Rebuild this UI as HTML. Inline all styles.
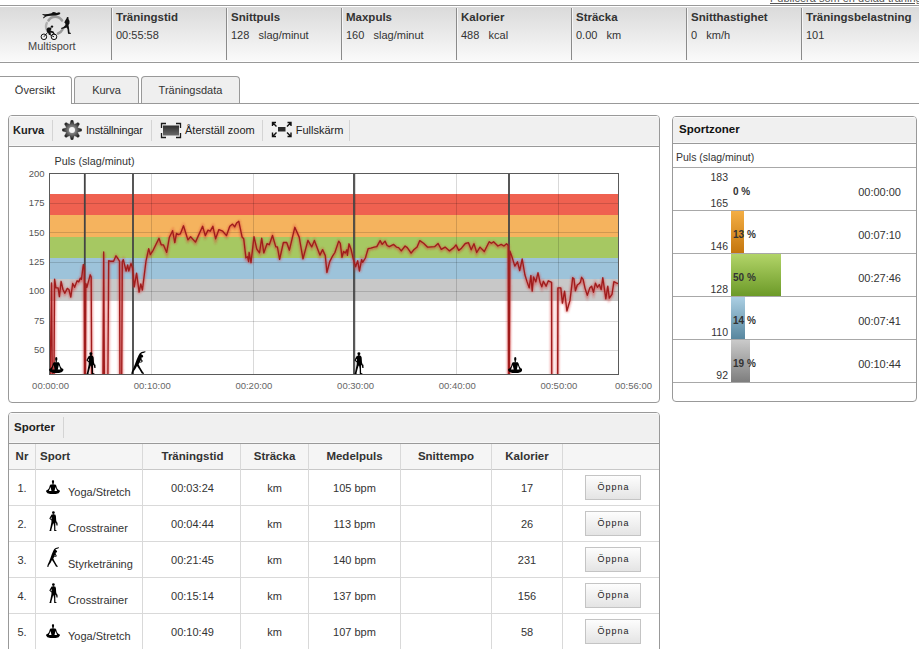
<!DOCTYPE html>
<html><head><meta charset="utf-8">
<style>
*{box-sizing:border-box;margin:0;padding:0}
html,body{width:919px;height:649px;overflow:hidden;background:#fff;font-family:"Liberation Sans",sans-serif;color:#333;font-size:11px}
.a{position:absolute;white-space:nowrap}
.hdr{position:absolute;left:0;top:5px;width:919px;height:58px;border-top:1px solid #999;border-bottom:1px solid #999;background:#fff}
.hdrin{position:absolute;left:0;top:1px;width:919px;height:54px;background:linear-gradient(#dadada,#fafafa)}
.dv{position:absolute;top:8px;width:1px;height:52px;background:#8a8a8a;box-shadow:1px 0 #f6f6f6}
.ht{position:absolute;top:11px;font-weight:bold;font-size:11.5px;color:#333}
.hv{position:absolute;top:29px;font-size:11px;color:#333}
.tabline{position:absolute;left:71px;top:103px;width:848px;height:1px;background:#999}
.tab{position:absolute;top:76px;height:27px;border:1px solid #999;border-bottom:none;border-radius:4px 4px 0 0;background:#efefef;text-align:center;font-size:11px;line-height:26px;color:#333}
.panel{position:absolute;border:1px solid #999;border-radius:4px;background:#fff;overflow:hidden}
.tb{position:absolute;left:0;top:0;right:0;background:#f0f0f0;border-bottom:1px solid #999;box-shadow:inset 0 1px #fafafa,inset 0 -1px #f7f7f7}
.sep{position:absolute;width:1px;background:#d4d4d4}
.zl{position:absolute;left:673px;width:243px;height:1px;background:#a8a8a8}
.zn{position:absolute;width:60px;text-align:right;font-size:10.5px;color:#333;line-height:12px}
.zp{position:absolute;left:733px;font-size:10px;font-weight:bold;color:#333;line-height:12px;margin-top:1px}
.zt{position:absolute;left:820px;width:81px;text-align:right;font-size:11px;color:#333;line-height:12px;margin-top:0.5px}
.bar{position:absolute;left:731px;height:42px}
.rl{position:absolute;left:9px;width:650px;height:1px;background:#d9d9d9}
.cl{position:absolute;top:444px;width:1px;height:205px;background:#d9d9d9}
.th{position:absolute;top:450px;font-weight:bold;font-size:11.5px;color:#333;text-align:center;line-height:12px}
.td{position:absolute;font-size:11px;color:#333;text-align:center;line-height:12px}
.btn{position:absolute;left:585px;width:56px;height:25px;border:1px solid #c4c4c4;background:linear-gradient(#fdfdfd,#e4e4e4);font-size:9px;color:#222;text-align:center;line-height:22.5px;letter-spacing:1px;padding-left:1px}
</style></head><body>

<div class="a" style="left:770px;top:-8px;font-size:11px;color:#555;text-decoration:underline">Publicera som en delad träning</div>

<div class="hdr"><div class="hdrin"></div></div>
<div class="dv" style="left:111px"></div>
<div class="dv" style="left:226px"></div>
<div class="dv" style="left:341px"></div>
<div class="dv" style="left:456px"></div>
<div class="dv" style="left:571px"></div>
<div class="dv" style="left:686px"></div>
<div class="dv" style="left:801px"></div>

<!-- multisport logo -->
<svg class="a" style="left:38px;top:8px" width="36" height="34" viewBox="0 0 36 34">
  <defs><filter id="lb" x="-20%" y="-20%" width="140%" height="140%"><feGaussianBlur stdDeviation="0.6"/></filter></defs>
  <g filter="url(#lb)" fill="none" stroke-linecap="round">
    <path d="M10.5,12.5 A8,8 0 0 1 24,12.5" stroke="#9c9c9c" stroke-width="2.6"/>
    <path d="M24.5,21.5 A8,8 0 0 1 20,25.5" stroke="#9a9a9a" stroke-width="2.6"/>
    <path d="M9.5,23 A8,8 0 0 1 8.8,15" stroke="#b0b0b0" stroke-width="2.4"/>
  </g>
  <path d="M4,6 L7,6.2 L10,6 L13.5,5.2 L15,4 L17,4.3 L18.5,5 L21,4.2 L22.5,5 L21.5,6.5 L18,7.5 L13,7.8 L10,8 L8,8.5 L6,10 L5,10.5 L5.5,9 L7,8 L5,7 Z" fill="#111"/>
  <path d="M29,9 L30.5,9.3 L30.5,11 L31.5,13 L31.5,15.5 L30.5,17 L31,20 L31.5,24.5 L33,25 L32.5,26 L30,25.8 L29.5,21 L28.5,19.5 L26,20.5 L23.5,21 L23,20 L25.5,19 L27.5,17 L27,14.5 L26,15 L27.5,12 L28.5,10.5 Z" fill="#111"/>
  <circle cx="14" cy="18.6" r="1.2" fill="#111"/>
  <path d="M13,19.5 L10,19.5 L8.5,21 L9,24 L10.5,25.5 L12,27 L13,26.5 L12.5,24.5 L14.5,25 L16,27 L17,26.5 L15.5,23.5 L12.5,22.5 L13.5,21 Z" fill="#111"/>
  <circle cx="5.9" cy="28.8" r="2.8" fill="none" stroke="#111" stroke-width="1"/>
  <circle cx="16" cy="28.8" r="2.8" fill="none" stroke="#111" stroke-width="1"/>
  <path d="M5.9,28.8 L9.5,24.5 M10.5,26 L16,28.8" fill="none" stroke="#111" stroke-width="0.9"/>
</svg>
<div class="a" style="left:28px;top:40px;font-size:11px;color:#444">Multisport</div>

<div class="ht" style="left:116px">Träningstid</div><div class="hv" style="left:116px">00:55:58</div>
<div class="ht" style="left:231px">Snittpuls</div><div class="hv" style="left:231px">128&nbsp;&nbsp; slag/minut</div>
<div class="ht" style="left:346px">Maxpuls</div><div class="hv" style="left:346px">160&nbsp;&nbsp; slag/minut</div>
<div class="ht" style="left:461px">Kalorier</div><div class="hv" style="left:461px">488&nbsp;&nbsp; kcal</div>
<div class="ht" style="left:576px">Sträcka</div><div class="hv" style="left:576px">0.00&nbsp;&nbsp; km</div>
<div class="ht" style="left:691px">Snitthastighet</div><div class="hv" style="left:691px">0&nbsp;&nbsp; km/h</div>
<div class="ht" style="left:806px">Träningsbelastning</div><div class="hv" style="left:806px">101</div>

<!-- tabs -->
<div class="tabline"></div>
<div class="tab" style="left:-10px;width:82px;height:28px;background:#fff;padding-left:8px">Översikt</div>
<div class="tab" style="left:74px;width:65px">Kurva</div>
<div class="tab" style="left:141px;width:99px">Träningsdata</div>

<!-- Kurva panel -->
<div class="panel" style="left:8px;top:115px;width:652px;height:288px">
  <div class="tb" style="height:31px"></div>
</div>
<div class="a" style="left:13px;top:124px;font-weight:bold;font-size:11px;color:#222">Kurva</div>
<div class="sep" style="left:52px;top:120px;height:21px"></div>
<svg class="a" style="left:62px;top:120px" width="20" height="20" viewBox="0 0 20 20">
  <defs><radialGradient id="gg" cx="50%" cy="50%" r="50%"><stop offset="0.3" stop-color="#8a8a8a"/><stop offset="0.65" stop-color="#555"/><stop offset="1" stop-color="#111"/></radialGradient></defs>
  <path d="M8.99,0.35 L11.01,0.35 L12.26,4.55 L16.10,2.46 L17.54,3.90 L15.45,7.74 L19.65,8.99 L19.65,11.01 L15.45,12.26 L17.54,16.10 L16.10,17.54 L12.26,15.45 L11.01,19.65 L8.99,19.65 L7.74,15.45 L3.90,17.54 L2.46,16.10 L4.55,12.26 L0.35,11.01 L0.35,8.99 L4.55,7.74 L2.46,3.90 L3.90,2.46 L7.74,4.55Z" fill="url(#gg)" stroke="#333" stroke-width="0.4" stroke-linejoin="round"/>
  <circle cx="10" cy="10" r="3" fill="#f4f4f4"/>
</svg>
<div class="a" style="left:86px;top:124px;font-size:11px;color:#222;letter-spacing:-0.2px">Inställningar</div>
<div class="sep" style="left:151px;top:120px;height:21px"></div>
<svg class="a" style="left:160px;top:122px" width="22" height="17" viewBox="0 0 22 17">
  <defs><linearGradient id="zg" x1="0" y1="0" x2="0" y2="1"><stop offset="0" stop-color="#2e2e2e"/><stop offset="1" stop-color="#6a6a6a"/></linearGradient></defs>
  <rect x="3" y="3.5" width="16" height="10" fill="url(#zg)"/>
  <path d="M1.5,6 V1.5 H6 M16,1.5 H20.5 V6 M20.5,11 V15.5 H16 M6,15.5 H1.5 V11" fill="none" stroke="#1a1a1a" stroke-width="1.3"/>
</svg>
<div class="a" style="left:185px;top:124px;font-size:11px;color:#222">Återställ zoom</div>
<div class="sep" style="left:262px;top:120px;height:21px"></div>
<svg class="a" style="left:271px;top:121px" width="22" height="17" viewBox="0 0 22 17">
  <rect x="7" y="6" width="7.5" height="4.5" fill="#2a2a2a"/>
  <path d="M1.5,5 V1.5 H5 M1.8,1.8 L5.5,5.5 M16.5,1.5 H20 V5 M19.7,1.8 L16,5.5 M1.5,11.5 V15.5 H5 M1.8,15.2 L5.5,11.5 M20,11.5 V15.5 H16.5 M19.7,15.2 L16,11.5" fill="none" stroke="#111" stroke-width="1.4"/>
</svg>
<div class="a" style="left:295.7px;top:124px;font-size:11px;color:#222">Fullskärm</div>
<div class="sep" style="left:349px;top:120px;height:21px"></div>

<svg class="a" style="left:0;top:0" width="919" height="649" viewBox="0 0 919 649">
<defs><clipPath id="pc"><rect x="49.5" y="173.5" width="569" height="201"/></clipPath><filter id="sh" x="-5%" y="-20%" width="110%" height="140%"><feGaussianBlur stdDeviation="0.9"/></filter></defs>
<rect x="49.5" y="173.5" width="569" height="201" fill="#fff"/>
<rect x="49.5" y="194" width="569" height="21" fill="#ef6150"/>
<rect x="49.5" y="215" width="569" height="22" fill="#f5b35e"/>
<rect x="49.5" y="237" width="569" height="21" fill="#a6c862"/>
<rect x="49.5" y="258" width="569" height="21" fill="#9dc3da"/>
<rect x="49.5" y="279" width="569" height="22" fill="#c8c8c8"/>
<line x1="49.5" y1="203.5" x2="618.5" y2="203.5" stroke="#000" stroke-opacity="0.15" stroke-width="1"/>
<line x1="49.5" y1="232.5" x2="618.5" y2="232.5" stroke="#000" stroke-opacity="0.15" stroke-width="1"/>
<line x1="49.5" y1="262.5" x2="618.5" y2="262.5" stroke="#000" stroke-opacity="0.15" stroke-width="1"/>
<line x1="49.5" y1="291.5" x2="618.5" y2="291.5" stroke="#000" stroke-opacity="0.15" stroke-width="1"/>
<line x1="49.5" y1="321.5" x2="618.5" y2="321.5" stroke="#000" stroke-opacity="0.15" stroke-width="1"/>
<line x1="49.5" y1="350.5" x2="618.5" y2="350.5" stroke="#000" stroke-opacity="0.15" stroke-width="1"/>
<line x1="151.5" y1="173.5" x2="151.5" y2="374.5" stroke="#000" stroke-opacity="0.15" stroke-width="1"/>
<line x1="253.5" y1="173.5" x2="253.5" y2="374.5" stroke="#000" stroke-opacity="0.15" stroke-width="1"/>
<line x1="355.5" y1="173.5" x2="355.5" y2="374.5" stroke="#000" stroke-opacity="0.15" stroke-width="1"/>
<line x1="456.5" y1="173.5" x2="456.5" y2="374.5" stroke="#000" stroke-opacity="0.15" stroke-width="1"/>
<line x1="558.5" y1="173.5" x2="558.5" y2="374.5" stroke="#000" stroke-opacity="0.15" stroke-width="1"/>
<line x1="84.8" y1="173.5" x2="84.8" y2="374.5" stroke="#444" stroke-width="1.8"/>
<line x1="133" y1="173.5" x2="133" y2="374.5" stroke="#444" stroke-width="1.8"/>
<line x1="354" y1="173.5" x2="354" y2="374.5" stroke="#444" stroke-width="1.8"/>
<line x1="509" y1="173.5" x2="509" y2="374.5" stroke="#444" stroke-width="1.8"/>
<g clip-path="url(#pc)"><path d="M49.6,420.0 L51.5,283.0 L52.6,420.0 L53.7,420.0 L54.6,279.2 L55.9,287.9 L58.1,287.9 L59.4,296.6 L61.1,281.3 L63.0,289.5 L64.8,293.3 L67.3,288.4 L68.9,289.5 L70.8,297.1 L72.7,283.5 L74.6,287.3 L77.1,280.8 L78.7,281.9 L80.4,278.1 L81.5,279.2 L83.3,264.5 L84.2,268.0 L84.7,420.0 L85.3,420.0 L85.8,283.5 L86.9,287.3 L90.2,274.8 L91.2,277.0 L91.8,420.0 L102.7,420.0 L103.7,252.0 L104.6,420.0 L107.6,420.0 L108.7,260.7 L110.3,261.2 L113.6,261.2 L116.0,255.8 L117.9,258.5 L119.5,261.2 L120.1,420.0 L121.5,420.0 L122.3,261.8 L123.3,259.6 L126.1,271.0 L127.7,265.0 L128.8,271.0 L131.0,263.4 L132.6,268.3 L134.2,286.8 L136.6,273.2 L139.1,292.2 L140.8,284.0 L142.4,290.0 L146.0,261.1 L148.7,248.6 L150.3,254.6 L153.1,250.3 L159.0,238.3 L161.2,244.8 L163.4,244.8 L166.7,252.4 L169.4,237.2 L172.6,230.7 L174.8,242.6 L176.5,233.4 L178.1,234.5 L180.3,233.9 L183.5,225.8 L187.9,239.9 L190.6,236.7 L195.5,242.1 L202.6,226.3 L205.3,235.6 L208.0,230.1 L210.2,231.2 L212.9,226.3 L215.6,238.8 L218.9,229.6 L222.7,231.2 L226.5,235.6 L229.8,226.3 L232.5,224.1 L234.7,226.9 L236.6,223.0 L238.8,221.3 L242.1,237.1 L243.7,238.7 L245.9,257.8 L247.5,256.7 L248.6,261.6 L249.1,252.3 L251.0,262.7 L254.0,236.6 L256.8,249.1 L259.5,252.9 L261.7,238.2 L263.8,252.9 L267.1,243.6 L269.3,244.7 L272.5,235.5 L275.8,246.9 L277.4,246.9 L279.6,259.4 L283.4,242.5 L286.7,242.5 L289.4,250.2 L294.8,227.3 L299.2,237.1 L303.0,258.9 L307.9,240.4 L311.7,246.9 L314.4,240.4 L319.9,255.1 L322.6,249.6 L325.3,255.6 L326.9,272.5 L329.7,261.6 L332.7,255.8 L334.9,252.5 L338.7,241.1 L340.3,243.3 L342.0,257.4 L343.6,251.5 L345.2,253.1 L346.9,249.8 L347.4,255.3 L349.0,243.8 L351.2,249.8 L353.4,259.6 L355.6,266.7 L357.7,260.7 L359.4,271.0 L361.6,259.6 L362.6,262.3 L365.4,258.0 L368.1,248.7 L370.8,248.2 L374.1,247.1 L376.8,246.6 L380.1,240.6 L382.2,244.4 L385.0,241.1 L387.1,245.5 L389.3,246.6 L393.7,244.4 L396.4,247.1 L398.6,247.6 L401.3,250.9 L405.1,246.0 L407.3,247.6 L411.1,253.1 L413.8,249.8 L417.1,247.1 L419.8,240.6 L423.6,243.3 L427.4,247.1 L428.3,247.1 L434.8,246.6 L438.1,243.5 L441.3,249.3 L445.1,247.1 L449.5,250.9 L453.8,247.6 L456.0,244.9 L458.7,250.4 L461.5,248.2 L465.3,243.5 L468.5,242.7 L471.2,249.8 L474.0,243.8 L476.7,252.5 L480.0,247.1 L484.3,251.5 L489.2,241.7 L491.4,243.3 L493.6,241.7 L497.9,246.0 L501.2,244.4 L503.9,246.0 L506.6,243.8 L508.2,245.5 L508.6,420.0 L509.2,420.0 L509.9,250.9 L512.0,256.9 L514.8,266.1 L517.5,261.8 L519.7,270.5 L522.2,259.0 L524.9,274.8 L527.1,281.9 L529.2,287.9 L530.9,275.4 L532.2,291.1 L533.6,277.0 L535.8,281.9 L538.0,272.6 L540.1,282.4 L541.8,286.8 L543.4,281.3 L546.1,286.2 L548.3,280.8 L551.6,282.4 L551.8,420.0 L557.5,420.0 L557.9,287.9 L560.8,287.9 L562.4,303.1 L564.6,291.1 L566.9,311.0 L570.0,300.4 L572.7,277.7 L573.9,278.5 L575.4,290.8 L577.3,285.0 L579.3,283.5 L580.4,282.3 L581.6,277.3 L583.1,279.3 L585.0,288.1 L587.3,295.4 L589.7,288.1 L591.6,286.2 L593.5,292.3 L595.4,283.1 L597.4,287.3 L599.3,284.6 L601.2,289.7 L602.8,277.7 L605.8,298.9 L607.8,286.2 L609.3,298.1 L612.0,294.3 L613.9,281.6 L617.4,283.5 L618.5,283.0" transform="translate(0,0.8)" fill="none" stroke="#d83030" stroke-opacity="0.55" stroke-width="2.8" filter="url(#sh)"/><path d="M49.6,420.0 L51.5,283.0 L52.6,420.0 L53.7,420.0 L54.6,279.2 L55.9,287.9 L58.1,287.9 L59.4,296.6 L61.1,281.3 L63.0,289.5 L64.8,293.3 L67.3,288.4 L68.9,289.5 L70.8,297.1 L72.7,283.5 L74.6,287.3 L77.1,280.8 L78.7,281.9 L80.4,278.1 L81.5,279.2 L83.3,264.5 L84.2,268.0 L84.7,420.0 L85.3,420.0 L85.8,283.5 L86.9,287.3 L90.2,274.8 L91.2,277.0 L91.8,420.0 L102.7,420.0 L103.7,252.0 L104.6,420.0 L107.6,420.0 L108.7,260.7 L110.3,261.2 L113.6,261.2 L116.0,255.8 L117.9,258.5 L119.5,261.2 L120.1,420.0 L121.5,420.0 L122.3,261.8 L123.3,259.6 L126.1,271.0 L127.7,265.0 L128.8,271.0 L131.0,263.4 L132.6,268.3 L134.2,286.8 L136.6,273.2 L139.1,292.2 L140.8,284.0 L142.4,290.0 L146.0,261.1 L148.7,248.6 L150.3,254.6 L153.1,250.3 L159.0,238.3 L161.2,244.8 L163.4,244.8 L166.7,252.4 L169.4,237.2 L172.6,230.7 L174.8,242.6 L176.5,233.4 L178.1,234.5 L180.3,233.9 L183.5,225.8 L187.9,239.9 L190.6,236.7 L195.5,242.1 L202.6,226.3 L205.3,235.6 L208.0,230.1 L210.2,231.2 L212.9,226.3 L215.6,238.8 L218.9,229.6 L222.7,231.2 L226.5,235.6 L229.8,226.3 L232.5,224.1 L234.7,226.9 L236.6,223.0 L238.8,221.3 L242.1,237.1 L243.7,238.7 L245.9,257.8 L247.5,256.7 L248.6,261.6 L249.1,252.3 L251.0,262.7 L254.0,236.6 L256.8,249.1 L259.5,252.9 L261.7,238.2 L263.8,252.9 L267.1,243.6 L269.3,244.7 L272.5,235.5 L275.8,246.9 L277.4,246.9 L279.6,259.4 L283.4,242.5 L286.7,242.5 L289.4,250.2 L294.8,227.3 L299.2,237.1 L303.0,258.9 L307.9,240.4 L311.7,246.9 L314.4,240.4 L319.9,255.1 L322.6,249.6 L325.3,255.6 L326.9,272.5 L329.7,261.6 L332.7,255.8 L334.9,252.5 L338.7,241.1 L340.3,243.3 L342.0,257.4 L343.6,251.5 L345.2,253.1 L346.9,249.8 L347.4,255.3 L349.0,243.8 L351.2,249.8 L353.4,259.6 L355.6,266.7 L357.7,260.7 L359.4,271.0 L361.6,259.6 L362.6,262.3 L365.4,258.0 L368.1,248.7 L370.8,248.2 L374.1,247.1 L376.8,246.6 L380.1,240.6 L382.2,244.4 L385.0,241.1 L387.1,245.5 L389.3,246.6 L393.7,244.4 L396.4,247.1 L398.6,247.6 L401.3,250.9 L405.1,246.0 L407.3,247.6 L411.1,253.1 L413.8,249.8 L417.1,247.1 L419.8,240.6 L423.6,243.3 L427.4,247.1 L428.3,247.1 L434.8,246.6 L438.1,243.5 L441.3,249.3 L445.1,247.1 L449.5,250.9 L453.8,247.6 L456.0,244.9 L458.7,250.4 L461.5,248.2 L465.3,243.5 L468.5,242.7 L471.2,249.8 L474.0,243.8 L476.7,252.5 L480.0,247.1 L484.3,251.5 L489.2,241.7 L491.4,243.3 L493.6,241.7 L497.9,246.0 L501.2,244.4 L503.9,246.0 L506.6,243.8 L508.2,245.5 L508.6,420.0 L509.2,420.0 L509.9,250.9 L512.0,256.9 L514.8,266.1 L517.5,261.8 L519.7,270.5 L522.2,259.0 L524.9,274.8 L527.1,281.9 L529.2,287.9 L530.9,275.4 L532.2,291.1 L533.6,277.0 L535.8,281.9 L538.0,272.6 L540.1,282.4 L541.8,286.8 L543.4,281.3 L546.1,286.2 L548.3,280.8 L551.6,282.4 L551.8,420.0 L557.5,420.0 L557.9,287.9 L560.8,287.9 L562.4,303.1 L564.6,291.1 L566.9,311.0 L570.0,300.4 L572.7,277.7 L573.9,278.5 L575.4,290.8 L577.3,285.0 L579.3,283.5 L580.4,282.3 L581.6,277.3 L583.1,279.3 L585.0,288.1 L587.3,295.4 L589.7,288.1 L591.6,286.2 L593.5,292.3 L595.4,283.1 L597.4,287.3 L599.3,284.6 L601.2,289.7 L602.8,277.7 L605.8,298.9 L607.8,286.2 L609.3,298.1 L612.0,294.3 L613.9,281.6 L617.4,283.5 L618.5,283.0" fill="none" stroke="#a01c1c" stroke-width="1.35" stroke-linejoin="round"/></g>
<rect x="49.5" y="173.5" width="569" height="201" fill="none" stroke="#5a5a5a" stroke-width="1"/>
<text x="44.5" y="176.7" text-anchor="end" font-size="9.5" fill="#555" font-family="Liberation Sans">200</text>
<text x="44.5" y="206.1" text-anchor="end" font-size="9.5" fill="#555" font-family="Liberation Sans">175</text>
<text x="44.5" y="235.5" text-anchor="end" font-size="9.5" fill="#555" font-family="Liberation Sans">150</text>
<text x="44.5" y="264.9" text-anchor="end" font-size="9.5" fill="#555" font-family="Liberation Sans">125</text>
<text x="44.5" y="294.3" text-anchor="end" font-size="9.5" fill="#555" font-family="Liberation Sans">100</text>
<text x="44.5" y="323.7" text-anchor="end" font-size="9.5" fill="#555" font-family="Liberation Sans">75</text>
<text x="44.5" y="353.1" text-anchor="end" font-size="9.5" fill="#555" font-family="Liberation Sans">50</text>
<text x="50.6" y="389" text-anchor="middle" font-size="9.5" fill="#666" font-family="Liberation Sans">00:00:00</text>
<text x="152.3" y="389" text-anchor="middle" font-size="9.5" fill="#666" font-family="Liberation Sans">00:10:00</text>
<text x="253.9" y="389" text-anchor="middle" font-size="9.5" fill="#666" font-family="Liberation Sans">00:20:00</text>
<text x="355.6" y="389" text-anchor="middle" font-size="9.5" fill="#666" font-family="Liberation Sans">00:30:00</text>
<text x="457.3" y="389" text-anchor="middle" font-size="9.5" fill="#666" font-family="Liberation Sans">00:40:00</text>
<text x="558.9" y="389" text-anchor="middle" font-size="9.5" fill="#666" font-family="Liberation Sans">00:50:00</text>
<text x="652" y="389" text-anchor="end" font-size="9.5" fill="#666" font-family="Liberation Sans">00:56:00</text>
<text x="54.5" y="165" font-size="10.75" fill="#333" font-family="Liberation Sans">Puls (slag/minut)</text>
</svg><svg class="a" style="left:49px;top:357px" width="14.5" height="16" viewBox="0 0 14 14" preserveAspectRatio="none" fill="#000"><ellipse cx="7" cy="1.75" rx="1.1" ry="1.65"/><rect x="6.4" y="3" width="1.2" height="1.8"/><path fill-rule="evenodd" d="M4.6,4.5 L9.4,4.5 L10.2,5.6 L11,8.2 L12.3,9.8 L13.8,10.4 L13.9,11.6 L12.6,13.2 L9.8,14 L4.2,14 L1.4,13.2 L0.1,11.6 L0.2,10.4 L1.7,9.8 L3,8.2 L3.8,5.6 Z M2.9,11 L4.5,6.9 L5.5,11 Z M11.1,11 L9.5,6.9 L8.5,11 Z"/></svg><svg class="a" style="left:85.5px;top:352px" width="10" height="22" viewBox="0 0 9 20" preserveAspectRatio="none" fill="#000"><circle cx="4.4" cy="1.5" r="1.35"/><rect x="3.7" y="2.4" width="1.4" height="1.3"/><path fill-rule="evenodd" d="M2.6,3.4 L6.2,3.4 L6.9,5 L7.2,9.5 L7.8,11.3 L8.5,11.7 L8.6,14.5 L7.5,14.6 L7.1,12.2 L6.4,11.5 L6.3,15 L6.4,19.1 L7.7,19.6 L7.5,20 L5.2,20 L5.1,15.5 L4.6,12.6 L4.1,12.6 L3.1,16 L2.3,19.1 L2.4,20 L0.3,20 L0.8,19.1 L1.6,15.5 L2.4,11.3 L2.5,9.6 L0.3,7.4 L1.4,5.4 Z M1.5,7.3 L2.6,8.5 L2.6,6.1 Z"/></svg><svg class="a" style="left:131px;top:351px" width="14.5" height="23" viewBox="0 0 14.5 23" preserveAspectRatio="none" fill="#000"><path fill-rule="evenodd" d="M14.2,0.3 L14.6,1.1 L12.5,1.9 L10.8,2.2 L10.2,3.2 L11.6,3.9 L12.3,5.2 L11.5,6.4 L10.5,6.6 L10.6,8.4 L11.6,9.4 L11.5,10.8 L10.2,11.6 L8.6,11.6 L7.6,13.2 L9.2,16.5 L11.6,20.5 L13,22.2 L12.6,23 L10.8,22.5 L8.4,18.5 L6,15 L4.4,18 L2.2,21 L1.6,23 L0.2,22.8 L0.8,20.5 L2.6,16.6 L4.2,12.6 L5.8,8.2 L7.6,4.2 L8.8,2.2 L10.6,1.1 Z M9.3,9.4 L10.6,9.7 L10.2,10.8 L8.9,10.8 Z"/></svg><svg class="a" style="left:354px;top:352px" width="10" height="22" viewBox="0 0 9 20" preserveAspectRatio="none" fill="#000"><circle cx="4.4" cy="1.5" r="1.35"/><rect x="3.7" y="2.4" width="1.4" height="1.3"/><path fill-rule="evenodd" d="M2.6,3.4 L6.2,3.4 L6.9,5 L7.2,9.5 L7.8,11.3 L8.5,11.7 L8.6,14.5 L7.5,14.6 L7.1,12.2 L6.4,11.5 L6.3,15 L6.4,19.1 L7.7,19.6 L7.5,20 L5.2,20 L5.1,15.5 L4.6,12.6 L4.1,12.6 L3.1,16 L2.3,19.1 L2.4,20 L0.3,20 L0.8,19.1 L1.6,15.5 L2.4,11.3 L2.5,9.6 L0.3,7.4 L1.4,5.4 Z M1.5,7.3 L2.6,8.5 L2.6,6.1 Z"/></svg><svg class="a" style="left:507.5px;top:357px" width="14.5" height="16" viewBox="0 0 14 14" preserveAspectRatio="none" fill="#000"><ellipse cx="7" cy="1.75" rx="1.1" ry="1.65"/><rect x="6.4" y="3" width="1.2" height="1.8"/><path fill-rule="evenodd" d="M4.6,4.5 L9.4,4.5 L10.2,5.6 L11,8.2 L12.3,9.8 L13.8,10.4 L13.9,11.6 L12.6,13.2 L9.8,14 L4.2,14 L1.4,13.2 L0.1,11.6 L0.2,10.4 L1.7,9.8 L3,8.2 L3.8,5.6 Z M2.9,11 L4.5,6.9 L5.5,11 Z M11.1,11 L9.5,6.9 L8.5,11 Z"/></svg>

<!-- Sportzoner panel -->
<div class="panel" style="left:672px;top:116px;width:245px;height:286px">
  <div class="tb" style="height:27px"></div>
</div>
<div class="a" style="left:679px;top:123px;font-weight:bold;font-size:11.5px;color:#111">Sportzoner</div>
<div class="a" style="left:676px;top:151px;font-size:10.5px;color:#333">Puls (slag/minut)</div>
<div class="zl" style="top:167px"></div>
<div class="zl" style="top:210px"></div>
<div class="zl" style="top:253px"></div>
<div class="zl" style="top:296px"></div>
<div class="zl" style="top:339px"></div>
<div class="zl" style="top:382px"></div>

<div class="bar" style="top:211px;width:13px;background:linear-gradient(#f4ae44,#c4760e)"></div>
<div class="bar" style="top:254px;width:50px;background:linear-gradient(#b2d468,#6c9a28)"></div>
<div class="bar" style="top:297px;width:14px;background:linear-gradient(#abcfe3,#58879f)"></div>
<div class="bar" style="top:340px;width:19px;background:linear-gradient(#cacaca,#7e7e7e)"></div>

<div class="zn" style="left:668px;top:171px">183</div>
<div class="zn" style="left:668px;top:197px">165</div>
<div class="zn" style="left:668px;top:240px">146</div>
<div class="zn" style="left:668px;top:283px">128</div>
<div class="zn" style="left:668px;top:326px">110</div>
<div class="zn" style="left:668px;top:369px">92</div>

<div class="zp" style="top:185px">0 %</div>
<div class="zp" style="top:228px">13 %</div>
<div class="zp" style="top:271px">50 %</div>
<div class="zp" style="top:314px">14 %</div>
<div class="zp" style="top:357px">19 %</div>

<div class="zt" style="top:185px">00:00:00</div>
<div class="zt" style="top:228px">00:07:10</div>
<div class="zt" style="top:271px">00:27:46</div>
<div class="zt" style="top:314px">00:07:41</div>
<div class="zt" style="top:357px">00:10:44</div>

<!-- Sporter panel -->
<div class="panel" style="left:8px;top:412px;width:652px;height:260px">
  <div class="tb" style="height:31px"></div>
  <div style="position:absolute;left:0;top:31px;width:650px;height:25px;background:#f5f5f5"></div>
</div>
<div class="a" style="left:14px;top:421px;font-weight:bold;font-size:11.5px;color:#222">Sporter</div>
<div class="sep" style="left:63px;top:417px;height:21px"></div>

<div class="rl" style="top:469px;background:#c8c8c8"></div>
<div class="rl" style="top:505px"></div>
<div class="rl" style="top:541px"></div>
<div class="rl" style="top:577px"></div>
<div class="rl" style="top:613px"></div>
<div class="cl" style="left:35px"></div>
<div class="cl" style="left:142px"></div>
<div class="cl" style="left:240px"></div>
<div class="cl" style="left:308px"></div>
<div class="cl" style="left:400px"></div>
<div class="cl" style="left:491px"></div>
<div class="cl" style="left:562px"></div>

<div class="th" style="left:9px;width:26px">Nr</div>
<div class="th" style="left:40px">Sport</div>
<div class="th" style="left:144px;width:97px">Träningstid</div>
<div class="th" style="left:241px;width:67px">Sträcka</div>
<div class="th" style="left:309px;width:91px">Medelpuls</div>
<div class="th" style="left:401px;width:90px">Snittempo</div>
<div class="th" style="left:492px;width:70px">Kalorier</div>

<div class="td" style="left:9px;width:26px;top:482px">1.</div>
<svg class="a" style="left:46px;top:480px" width="14" height="14" viewBox="0 0 14 14" preserveAspectRatio="none" fill="#000"><ellipse cx="7" cy="1.75" rx="1.1" ry="1.65"/><rect x="6.4" y="3" width="1.2" height="1.8"/><path fill-rule="evenodd" d="M4.6,4.5 L9.4,4.5 L10.2,5.6 L11,8.2 L12.3,9.8 L13.8,10.4 L13.9,11.6 L12.6,13.2 L9.8,14 L4.2,14 L1.4,13.2 L0.1,11.6 L0.2,10.4 L1.7,9.8 L3,8.2 L3.8,5.6 Z M2.9,11 L4.5,6.9 L5.5,11 Z M11.1,11 L9.5,6.9 L8.5,11 Z"/></svg>
<div class="td" style="left:68px;top:486px;text-align:left">Yoga/Stretch</div>
<div class="td" style="left:144px;width:97px;top:482px">00:03:24</div>
<div class="td" style="left:241px;width:67px;top:482px">km</div>
<div class="td" style="left:309px;width:91px;top:482px">105 bpm</div>
<div class="td" style="left:492px;width:70px;top:482px">17</div>
<div class="btn" style="top:475px">Öppna</div>
<div class="td" style="left:9px;width:26px;top:518px">2.</div>
<svg class="a" style="left:48.5px;top:511px" width="9" height="20" viewBox="0 0 9 20" preserveAspectRatio="none" fill="#000"><circle cx="4.4" cy="1.5" r="1.35"/><rect x="3.7" y="2.4" width="1.4" height="1.3"/><path fill-rule="evenodd" d="M2.6,3.4 L6.2,3.4 L6.9,5 L7.2,9.5 L7.8,11.3 L8.5,11.7 L8.6,14.5 L7.5,14.6 L7.1,12.2 L6.4,11.5 L6.3,15 L6.4,19.1 L7.7,19.6 L7.5,20 L5.2,20 L5.1,15.5 L4.6,12.6 L4.1,12.6 L3.1,16 L2.3,19.1 L2.4,20 L0.3,20 L0.8,19.1 L1.6,15.5 L2.4,11.3 L2.5,9.6 L0.3,7.4 L1.4,5.4 Z M1.5,7.3 L2.6,8.5 L2.6,6.1 Z"/></svg>
<div class="td" style="left:68px;top:522px;text-align:left">Crosstrainer</div>
<div class="td" style="left:144px;width:97px;top:518px">00:04:44</div>
<div class="td" style="left:241px;width:67px;top:518px">km</div>
<div class="td" style="left:309px;width:91px;top:518px">113 bpm</div>
<div class="td" style="left:492px;width:70px;top:518px">26</div>
<div class="btn" style="top:511px">Öppna</div>
<div class="td" style="left:9px;width:26px;top:554px">3.</div>
<svg class="a" style="left:47px;top:547px" width="12" height="20" viewBox="0 0 14.5 23" preserveAspectRatio="none" fill="#000"><path fill-rule="evenodd" d="M14.2,0.3 L14.6,1.1 L12.5,1.9 L10.8,2.2 L10.2,3.2 L11.6,3.9 L12.3,5.2 L11.5,6.4 L10.5,6.6 L10.6,8.4 L11.6,9.4 L11.5,10.8 L10.2,11.6 L8.6,11.6 L7.6,13.2 L9.2,16.5 L11.6,20.5 L13,22.2 L12.6,23 L10.8,22.5 L8.4,18.5 L6,15 L4.4,18 L2.2,21 L1.6,23 L0.2,22.8 L0.8,20.5 L2.6,16.6 L4.2,12.6 L5.8,8.2 L7.6,4.2 L8.8,2.2 L10.6,1.1 Z M9.3,9.4 L10.6,9.7 L10.2,10.8 L8.9,10.8 Z"/></svg>
<div class="td" style="left:68px;top:558px;text-align:left">Styrketräning</div>
<div class="td" style="left:144px;width:97px;top:554px">00:21:45</div>
<div class="td" style="left:241px;width:67px;top:554px">km</div>
<div class="td" style="left:309px;width:91px;top:554px">140 bpm</div>
<div class="td" style="left:492px;width:70px;top:554px">231</div>
<div class="btn" style="top:547px">Öppna</div>
<div class="td" style="left:9px;width:26px;top:590px">4.</div>
<svg class="a" style="left:48.5px;top:583px" width="9" height="20" viewBox="0 0 9 20" preserveAspectRatio="none" fill="#000"><circle cx="4.4" cy="1.5" r="1.35"/><rect x="3.7" y="2.4" width="1.4" height="1.3"/><path fill-rule="evenodd" d="M2.6,3.4 L6.2,3.4 L6.9,5 L7.2,9.5 L7.8,11.3 L8.5,11.7 L8.6,14.5 L7.5,14.6 L7.1,12.2 L6.4,11.5 L6.3,15 L6.4,19.1 L7.7,19.6 L7.5,20 L5.2,20 L5.1,15.5 L4.6,12.6 L4.1,12.6 L3.1,16 L2.3,19.1 L2.4,20 L0.3,20 L0.8,19.1 L1.6,15.5 L2.4,11.3 L2.5,9.6 L0.3,7.4 L1.4,5.4 Z M1.5,7.3 L2.6,8.5 L2.6,6.1 Z"/></svg>
<div class="td" style="left:68px;top:594px;text-align:left">Crosstrainer</div>
<div class="td" style="left:144px;width:97px;top:590px">00:15:14</div>
<div class="td" style="left:241px;width:67px;top:590px">km</div>
<div class="td" style="left:309px;width:91px;top:590px">137 bpm</div>
<div class="td" style="left:492px;width:70px;top:590px">156</div>
<div class="btn" style="top:583px">Öppna</div>
<div class="td" style="left:9px;width:26px;top:626px">5.</div>
<svg class="a" style="left:46px;top:624px" width="14" height="14" viewBox="0 0 14 14" preserveAspectRatio="none" fill="#000"><ellipse cx="7" cy="1.75" rx="1.1" ry="1.65"/><rect x="6.4" y="3" width="1.2" height="1.8"/><path fill-rule="evenodd" d="M4.6,4.5 L9.4,4.5 L10.2,5.6 L11,8.2 L12.3,9.8 L13.8,10.4 L13.9,11.6 L12.6,13.2 L9.8,14 L4.2,14 L1.4,13.2 L0.1,11.6 L0.2,10.4 L1.7,9.8 L3,8.2 L3.8,5.6 Z M2.9,11 L4.5,6.9 L5.5,11 Z M11.1,11 L9.5,6.9 L8.5,11 Z"/></svg>
<div class="td" style="left:68px;top:630px;text-align:left">Yoga/Stretch</div>
<div class="td" style="left:144px;width:97px;top:626px">00:10:49</div>
<div class="td" style="left:241px;width:67px;top:626px">km</div>
<div class="td" style="left:309px;width:91px;top:626px">107 bpm</div>
<div class="td" style="left:492px;width:70px;top:626px">58</div>
<div class="btn" style="top:619px">Öppna</div>

</body></html>
